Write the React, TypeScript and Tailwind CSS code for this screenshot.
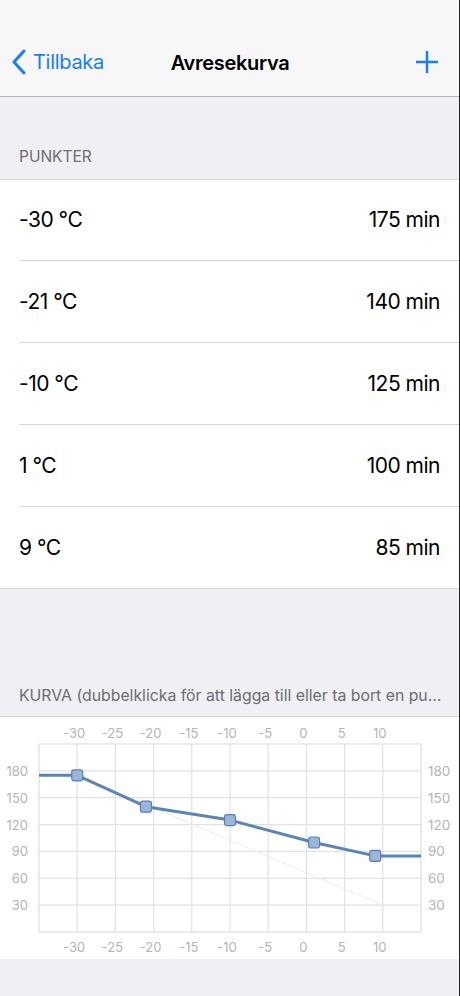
import React from "react";

const rows = [
  ["-30 °C", "175 min"],
  ["-21 °C", "140 min"],
  ["-10 °C", "125 min"],
  ["1 °C", "100 min"],
  ["9 °C", "85 min"],
];

const pts: [number, number][] = [
  [-30, 175],
  [-21, 140],
  [-10, 125],
  [1, 100],
  [9, 85],
];

const X0 = 39;
const PX = 7.64;
const TOP = 27;
const BOT = 215;
const PV = (BOT - TOP) / 210;
const xs = (t: number) => X0 + (t + 35) * PX;
const ys = (v: number) => BOT - v * PV;

function Chart() {
  const vlines = Array.from({ length: 11 }, (_, k) => X0 + k * 38.2);
  const hvals = [30, 60, 90, 120, 150, 180];
  const xlabels = [-30, -25, -20, -15, -10, -5, 0, 5, 10];
  const linePts = [
    [xs(-35), ys(175)],
    ...pts.map(([t, v]) => [xs(t), ys(v)]),
    [xs(15), ys(85)],
  ]
    .map((p) => p.join(","))
    .join(" ");
  return (
    <svg width="460" height="242" viewBox="0 0 460 242" className="block">
      <rect x={X0} y={TOP} width={382} height={BOT - TOP} fill="#fff" stroke="#dedede" strokeWidth="1.2" />
      {vlines.slice(1, 10).map((x) => (
        <line key={x} x1={x} y1={TOP} x2={x} y2={BOT} stroke="#e2e2e2" strokeWidth="1.2" />
      ))}
      {hvals.map((v) => (
        <line key={v} x1={X0} y1={ys(v)} x2={421} y2={ys(v)} stroke="#e2e2e2" strokeWidth="1.2" />
      ))}
      <line x1={xs(-30)} y1={ys(175)} x2={xs(10)} y2={ys(30)} stroke="#ececec" strokeWidth="1" />
      <polyline points={linePts} fill="none" stroke="#5b84bb" strokeWidth="3" strokeLinejoin="round" />
      {pts.map(([t, v]) => (
        <rect
          key={t}
          x={xs(t) - 5.5}
          y={ys(v) - 5.5}
          width="11"
          height="11"
          rx="2.5"
          fill="#9cb6da"
          stroke="#5a7fb2"
          strokeWidth="1.2"
        />
      ))}
      <g fontFamily="Inter, 'Liberation Sans', sans-serif" fontSize="13" fill="#b4b4b4">
        {xlabels.map((t) => (
          <text key={"t" + t} x={xs(t) - 3} y={21} textAnchor="middle">
            {t}
          </text>
        ))}
        {xlabels.map((t) => (
          <text key={"b" + t} x={xs(t) - 3} y={235} textAnchor="middle">
            {t}
          </text>
        ))}
        {hvals.map((v) => (
          <text key={"l" + v} x={28} y={ys(v) + 5} textAnchor="end">
            {v}
          </text>
        ))}
        {hvals.map((v) => (
          <text key={"r" + v} x={428} y={ys(v) + 5} textAnchor="start" fontSize="13.5">
            {v}
          </text>
        ))}
      </g>
    </svg>
  );
}

export default function App() {
  return (
    <div
      className="relative w-[460px] h-[996px] bg-[#efeff4] overflow-hidden"
      style={{ fontFamily: "Inter, 'Liberation Sans', sans-serif" }}
    >
      <div className="h-[97px] bg-[#f7f7f7] border-b border-[#b5b5b5] flex items-end pb-[21px] px-[12px] relative">
        <div className="flex items-center text-[#147efb]">
          <svg width="14" height="26" viewBox="0 0 14 26">
            <path d="M12 2 L2 13 L12 24" fill="none" stroke="#147efb" strokeWidth="3" strokeLinecap="round" strokeLinejoin="round" />
          </svg>
          <span className="ml-[7px] text-[20px] leading-none tracking-[-0.3px]">Tillbaka</span>
        </div>
        <div className="absolute left-0 right-0 bottom-[23px] text-center text-[20px] leading-none font-semibold text-black tracking-[-0.3px]">
          Avresekurva
        </div>
        <div className="ml-auto mr-[9px] mb-[1px]">
          <svg width="24" height="24" viewBox="0 0 24 24">
            <path d="M12 1 V23 M1 12 H23" stroke="#147efb" strokeWidth="2.4" />
          </svg>
        </div>
      </div>

      <div className="h-[82px] flex items-end pb-[11px] pl-[19px] text-[15.5px] text-[#6d6d72]">PUNKTER</div>

      <div className="bg-white border-t border-b border-[#d6d6d9]">
        {rows.map(([a, b], i) => (
          <div key={a} className="pl-[19px]">
            <div
              className={
                "flex items-center justify-between pr-[20px] text-[21px] text-black tracking-[-0.5px] " +
                (i === 0
                  ? "h-[81px] border-b border-[#d6d6d9]"
                  : i < rows.length - 1
                  ? "h-[82px] border-b border-[#d6d6d9]"
                  : "h-[81px]")
              }
            >
              <span>{a}</span>
              <span>{b}</span>
            </div>
          </div>
        ))}
      </div>

      <div className="h-[127px] flex items-end pb-[8px] pl-[19px] pr-[18px] text-[15.8px] text-[#6d6d72]">
        <span className="truncate block">KURVA (dubbelklicka för att lägga till eller ta bort en punkt)</span>
      </div>

      <div className="bg-white border-t border-[#d6d6d9]">
        <Chart />
      </div>

      <div className="absolute top-0 right-0 w-[1px] h-full bg-[#222]" />
    </div>
  );
}
